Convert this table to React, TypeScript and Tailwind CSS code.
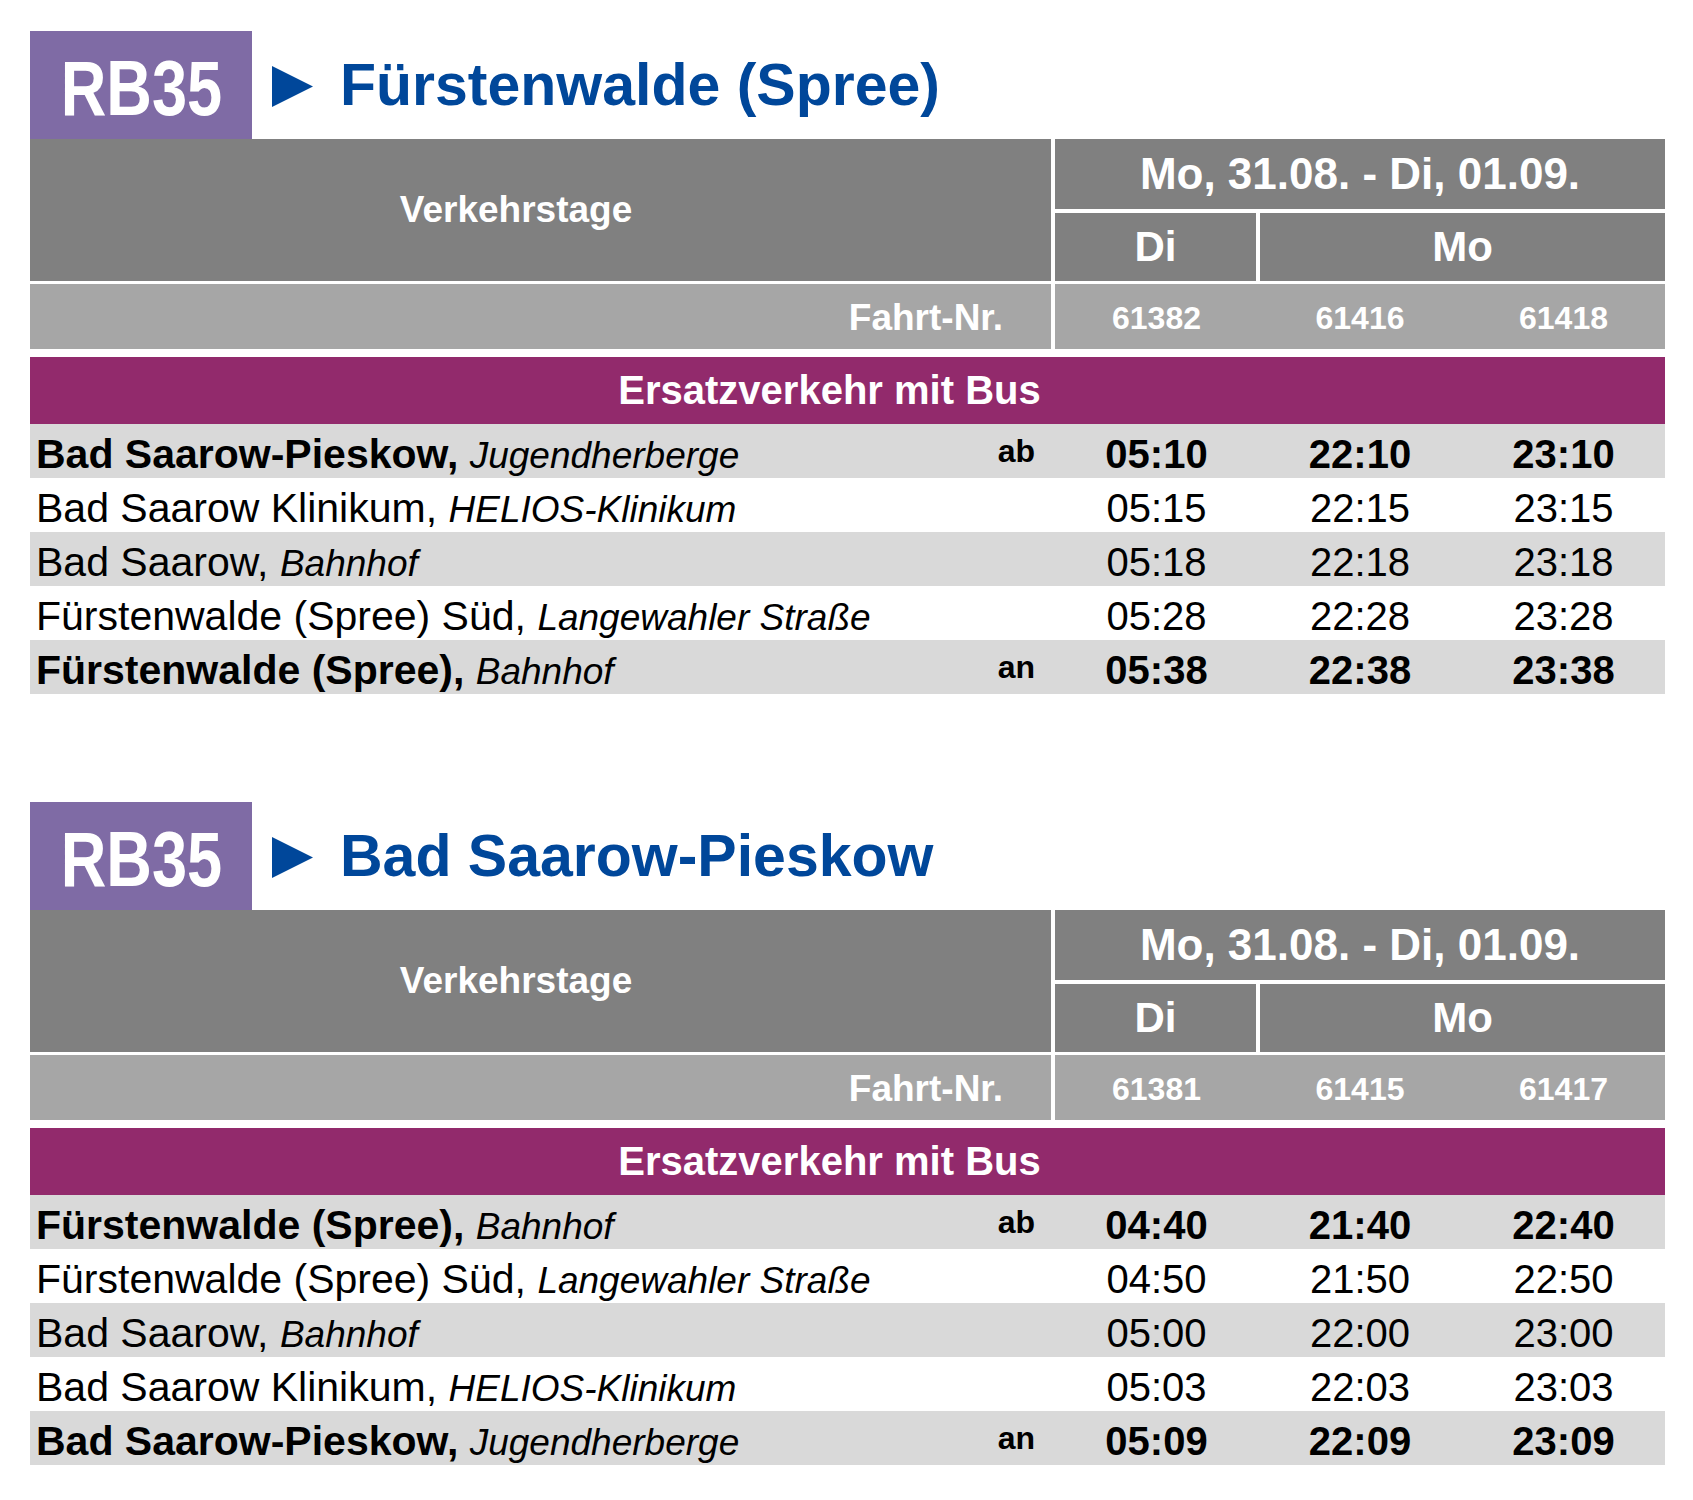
import React from 'react';

type Stop = {
  name: string;
  place: string;
  bold?: boolean;
  mark?: string;
  times: string[];
  shaded: boolean;
};

type Table = {
  destination: string;
  trips: string[];
  stops: Stop[];
};

const tables: Table[] = [
  {
    destination: 'Fürstenwalde (Spree)',
    trips: ['61382', '61416', '61418'],
    stops: [
      { name: 'Bad Saarow-Pieskow', place: 'Jugendherberge', bold: true, mark: 'ab', times: ['05:10', '22:10', '23:10'], shaded: true },
      { name: 'Bad Saarow Klinikum', place: 'HELIOS-Klinikum', times: ['05:15', '22:15', '23:15'], shaded: false },
      { name: 'Bad Saarow', place: 'Bahnhof', times: ['05:18', '22:18', '23:18'], shaded: true },
      { name: 'Fürstenwalde (Spree) Süd', place: 'Langewahler Straße', times: ['05:28', '22:28', '23:28'], shaded: false },
      { name: 'Fürstenwalde (Spree)', place: 'Bahnhof', bold: true, mark: 'an', times: ['05:38', '22:38', '23:38'], shaded: true },
    ],
  },
  {
    destination: 'Bad Saarow-Pieskow',
    trips: ['61381', '61415', '61417'],
    stops: [
      { name: 'Fürstenwalde (Spree)', place: 'Bahnhof', bold: true, mark: 'ab', times: ['04:40', '21:40', '22:40'], shaded: true },
      { name: 'Fürstenwalde (Spree) Süd', place: 'Langewahler Straße', times: ['04:50', '21:50', '22:50'], shaded: false },
      { name: 'Bad Saarow', place: 'Bahnhof', times: ['05:00', '22:00', '23:00'], shaded: true },
      { name: 'Bad Saarow Klinikum', place: 'HELIOS-Klinikum', times: ['05:03', '22:03', '23:03'], shaded: false },
      { name: 'Bad Saarow-Pieskow', place: 'Jugendherberge', bold: true, mark: 'an', times: ['05:09', '22:09', '23:09'], shaded: true },
    ],
  },
];

const colWidths = ['w-[203px]', 'w-[204px]', 'w-[203px]'];

function Timetable({ table }: { table: Table }) {
  return (
    <section className="flex w-[1635px] flex-col">
      {/* line badge + direction */}
      <div className="flex h-[108px] items-center">
        <div className="flex h-[108px] w-[222px] justify-center bg-[#7f6ba5]">
          <span className="scale-x-[0.82] pt-[6px] text-[77px] font-bold leading-[102px] text-white">RB35</span>
        </div>
        <svg className="ml-[20px] mt-[3px]" width="41" height="41" viewBox="0 0 41 41">
          <polygon points="0,0 41,20.5 0,41" fill="#00479a" />
        </svg>
        <span className="ml-[27px] text-[59px] font-bold leading-[108px] text-[#00479a]">{table.destination}</span>
      </div>

      {/* Verkehrstage */}
      <div className="flex h-[142px] text-white">
        <div className="flex w-[1021px] items-center justify-center bg-[#808080] pr-[49px] text-[37px] font-bold">Verkehrstage</div>
        <div className="w-[4px] bg-white" />
        <div className="flex w-[610px] flex-col">
          <div className="h-[70px] bg-[#808080] text-center text-[44px] font-bold leading-[70px]">Mo, 31.08. - Di, 01.09.</div>
          <div className="h-[4px] bg-white" />
          <div className="flex h-[68px]">
            <div className="w-[201px] bg-[#808080] text-center text-[42px] font-bold leading-[68px]">Di</div>
            <div className="w-[4px] bg-white" />
            <div className="w-[405px] bg-[#808080] text-center text-[42px] font-bold leading-[68px]">Mo</div>
          </div>
        </div>
      </div>

      {/* Fahrt-Nr. */}
      <div className="mt-[3px] flex h-[65px] text-white">
        <div className="w-[1021px] bg-[#a6a6a6] pr-[48px] pt-[3px] text-right text-[37px] font-bold leading-[62px]">Fahrt-Nr.</div>
        <div className="w-[4px] bg-white" />
        <div className="flex w-[610px] bg-[#a6a6a6] pt-[3px]">
          {table.trips.map((trip, i) => (
            <div key={trip} className={`${colWidths[i]} text-center text-[32px] font-bold leading-[62px]`}>{trip}</div>
          ))}
        </div>
      </div>

      <div className="mt-[8px] h-[67px] bg-[#922a6c] pr-[36px] text-center text-[40px] font-bold leading-[67px] text-white">Ersatzverkehr mit Bus</div>

      {table.stops.map((stop) => (
        <div key={stop.name} className={`flex h-[54px] text-black ${stop.shaded ? 'bg-[#d9d9d9]' : 'bg-white'}`}>
          <div className="flex w-[1025px] justify-between pl-[6px] pr-[20px]">
            <span className="whitespace-nowrap pt-[6px] text-[41px] leading-[48px]">
              <span className={stop.bold ? 'font-bold' : ''}>{stop.name},</span> <span className="text-[37px] italic">{stop.place}</span>
            </span>
            {stop.mark && <span className="text-[32px] font-bold leading-[54px]">{stop.mark}</span>}
          </div>
          {stop.times.map((t, i) => (
            <div key={i} className={`${colWidths[i]} pt-[6px] text-center text-[40px] leading-[48px] ${stop.bold ? 'font-bold' : ''}`}>{t}</div>
          ))}
        </div>
      ))}
    </section>
  );
}

export default function App() {
  return (
    <div className="min-h-[1500px] w-[1693px] bg-white pl-[30px] pt-[31px] font-['Liberation_Sans',Arial,sans-serif]">
      <div className="flex flex-col gap-[108px]">
        {tables.map((table) => (
          <Timetable key={table.destination} table={table} />
        ))}
      </div>
    </div>
  );
}
